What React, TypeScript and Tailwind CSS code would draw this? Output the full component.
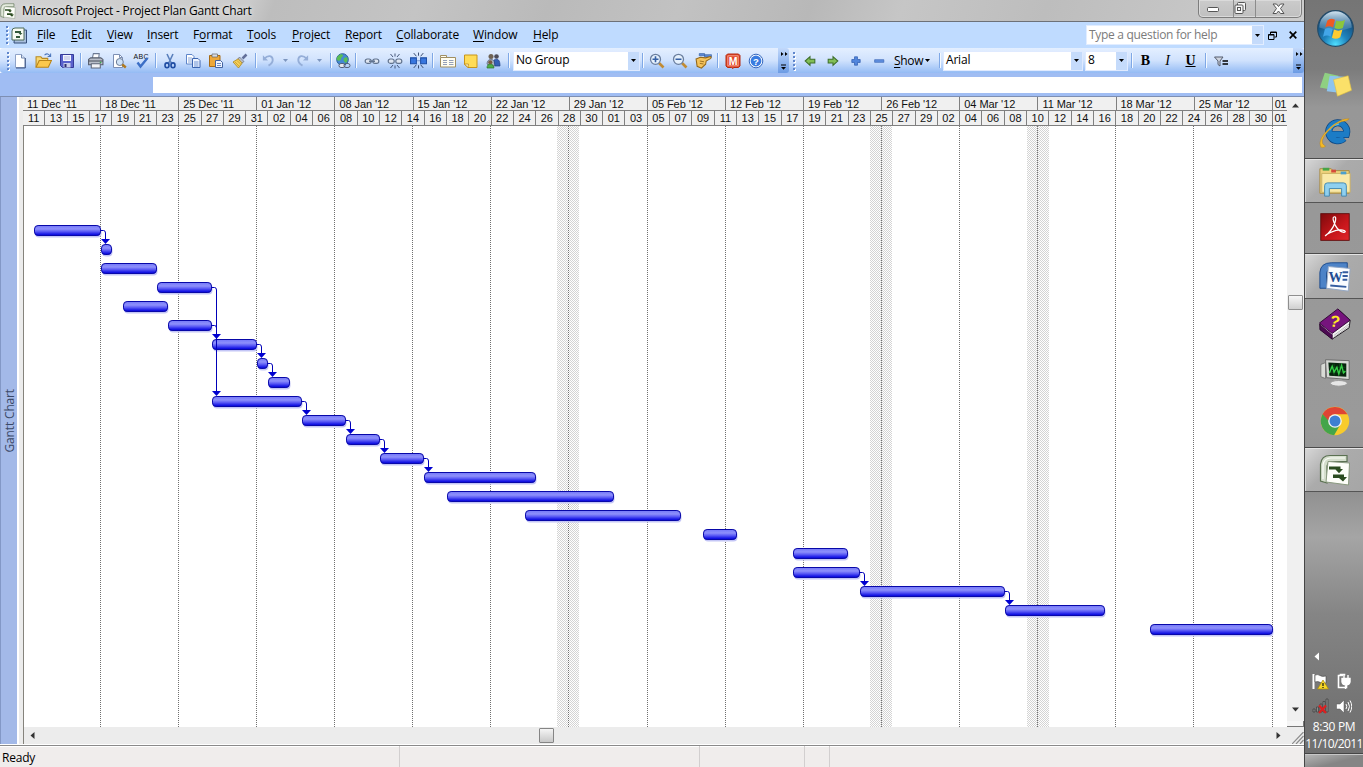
import React from "react";

type Kids = { children?: React.ReactNode };

const ui = "font-['Open_Sans','Noto_Sans',sans-serif]";
const arial = "font-['Liberation_Sans',Arial,sans-serif]";

/* ---------- timescale data ---------- */

const weeks = [
  "11 Dec '11", "18 Dec '11", "25 Dec '11", "01 Jan '12", "08 Jan '12", "15 Jan '12", "22 Jan '12", "29 Jan '12",
  "05 Feb '12", "12 Feb '12", "19 Feb '12", "26 Feb '12", "04 Mar '12", "11 Mar '12", "18 Mar '12", "25 Mar '12",
];

const days = Array.from({ length: 56 }, (_, i) => {
  const d = new Date(Date.UTC(2011, 11, 11 + i * 2));
  return String(d.getUTCDate()).padStart(2, "0");
});

const bars: [number, number][] = [
  [34, 101], [101, 112], [101, 157], [157, 212], [123, 168], [168, 212], [212, 257], [257, 268], [268, 290],
  [212, 302], [302, 346], [346, 380], [380, 424], [424, 536], [447, 614], [525, 681], [703, 737], [793, 848],
  [793, 860], [860, 1005], [1005, 1105], [1150, 1273],
];

const links: [number, number][] = [
  [0, 1], [3, 9], [5, 6], [6, 7], [7, 8], [9, 10], [10, 11], [11, 12], [12, 13], [18, 19], [19, 20],
];

const weekLines = [100, 178, 256, 334, 412, 490, 568, 647, 725, 803, 881, 959, 1037, 1115, 1193, 1272];

function Chart() {
  return (
    <svg width="1263" height="601" viewBox="24 126 1263 601" className="block bg-white">
      <defs>
        <linearGradient id="bar" x1="0" y1="0" x2="0" y2="1">
          <stop offset="0" stopColor="#7478f8" />
          <stop offset="0.35" stopColor="#8e90fb" />
          <stop offset="0.6" stopColor="#5a5af5" />
          <stop offset="0.85" stopColor="#1c1ce6" />
          <stop offset="1" stopColor="#0000d8" />
        </linearGradient>
        <pattern id="hatch" width="2" height="2" patternUnits="userSpaceOnUse">
          <rect width="1" height="1" fill="#d4d4d4" />
          <rect x="1" y="1" width="1" height="1" fill="#d4d4d4" />
        </pattern>
      </defs>
      {[557, 870, 1027].map((x) => (
        <rect key={x} x={x} y="126" width="22" height="601" fill="url(#hatch)" />
      ))}
      {weekLines.map((x) => (
        <path key={x} d={`M${x + 0.5} 126V727`} stroke="#707070" strokeDasharray="1 1" />
      ))}
      {bars.map(([a, b], i) => {
        const y = 225 + i * 19;
        return (
          <g key={i}>
            <rect x={a + 1} y={y + 2} width={b - a - 0.5} height="10.5" rx="4" fill="#c4c6f6" />
            <rect x={a + 0.5} y={y + 0.5} width={b - a - 1} height="10" rx="3.6" fill="url(#bar)" stroke="#0808a8" />
          </g>
        );
      })}
      {links.map(([f, t]) => {
        const x = bars[f][1];
        const y = 225 + f * 19 + 5.5;
        const ty = 225 + t * 19;
        return (
          <g key={`${f}-${t}`}>
            <path d={`M${x} ${y}h2.5q2 0 2 2.5V${ty - 3}`} fill="none" stroke="#0000b8" />
            <path d={`M${x} ${ty - 5}h9l-4.5 5z`} fill="#0000d0" />
          </g>
        );
      })}
    </svg>
  );
}

/* ---------- small pieces ---------- */

function I({ children, s = 16 }: Kids & { s?: number }) {
  return (
    <svg width={s} height={s} viewBox="0 0 16 16" fill="none" className="block shrink-0">
      {children}
    </svg>
  );
}

function Cell({ w, children }: Kids & { w: string }) {
  return <div className={`flex h-full shrink-0 items-center justify-center ${w}`}>{children}</div>;
}

function Sep({ w }: { w: string }) {
  return (
    <div className={`flex h-full shrink-0 items-center justify-center ${w}`}>
      <div className="h-[15px] w-px bg-[#7fa8e6]" />
      <div className="h-[15px] w-px bg-[#f4f9ff]" />
    </div>
  );
}

function Grip({ n = 5 }: { n?: number }) {
  return (
    <div className="flex flex-col gap-[2px]">
      {Array.from({ length: n }, (_, i) => (
        <div key={i} className="h-[2px] w-[2px] bg-[#5f86cc] shadow-[1px_1px_0_#ffffff]" />
      ))}
    </div>
  );
}

function Down({ c = "#000" }: { c?: string }) {
  return (
    <svg width="5" height="3" viewBox="0 0 5 3" className="block shrink-0">
      <path d="M0 0h5L2.5 3z" fill={c} />
    </svg>
  );
}

function Combo({ w, text }: { w: string; text: string }) {
  return (
    <div className={`flex h-[20px] shrink-0 border border-[#dfeaff] bg-white ${w}`}>
      <span className="flex-1 pl-[2px] text-[12px] leading-[16px] tracking-[-0.2px]">{text}</span>
      <div className="flex w-[11px] items-center justify-center bg-[#c5dbfb]">
        <Down />
      </div>
    </div>
  );
}

function Overflow() {
  return (
    <div className="flex h-[25px] w-[11px] shrink-0 flex-col items-center justify-between rounded-r-[3px] bg-gradient-to-b from-[#c2d9fb] to-[#6c9be4] pt-[4px] pb-[3px]">
      <svg width="8" height="5" viewBox="0 0 8 5"><path d="M1 0l2.5 2L1 4zM5 0l2.5 2L5 4z" fill="#000" /></svg>
      <svg width="7" height="6" viewBox="0 0 7 6"><path d="M1 1h5" stroke="#000" /><path d="M1 3h5L3.5 5.7z" fill="#000" /></svg>
    </div>
  );
}

/* ---------- toolbar icons ---------- */

const NewDoc = () => (
  <I><path d="M3.5 1.5h6l3.5 3.5v9.5H3.5z" fill="#fff" stroke="#8fa3c8" /><path d="M9.5 1.5V5H13" fill="#dbe5f5" stroke="#7388b0" /><path d="M13.3 5v10H4" stroke="#3f5583" /></I>
);
const Open = () => (
  <I s={17}><path d="M1 14V4.500h4.500l1.300 1.500H12v3" fill="#f7d774" stroke="#b88a22" /><path d="M1 14.300l3-6.300h11.500L12.500 14.300z" fill="#fbc84c" stroke="#b98418" /><path d="M9 3c2-2 4-1.500 5 .8M14.700 1.500v2.800h-2.800" stroke="#4e78bd" /></I>
);
const Save = () => (
  <I><path d="M1.500 1.500h13v13h-11l-2-2z" fill="#5a62cc" stroke="#353a98" /><path d="M4 2h8v6H4z" fill="#f2f4ff" /><path d="M5 4h6M5 6h6" stroke="#b4b9dd" /><path d="M4.500 10h7v4.500h-7z" fill="#c9cdea" /><path d="M5.500 11h2v3h-2z" fill="#2c3070" /></I>
);
const Print = () => (
  <I s={17}><path d="M5 6l1-4.500h5.500L11 6" fill="#fff" stroke="#6d7a94" /><path d="M1.500 7l2-1.500h9.500L15 7v5H1.500z" fill="#b9bec9" stroke="#555c6c" /><path d="M1.500 8.500H15" stroke="#474d5b" /><path d="M4 11h8.500v4H4z" fill="#f2f3f7" stroke="#5e6678" /><path d="M12 9.800h1.500" stroke="#37b047" strokeWidth="1.300" /></I>
);
const Preview = () => (
  <I><path d="M2.500 1.500h6l3 3v10h-9z" fill="#fff" stroke="#7d8fb3" /><path d="M8.500 1.500v3h3" stroke="#7d8fb3" /><circle cx="8.800" cy="9" r="3.500" fill="#cfe2f6" stroke="#6b7c97" /><path d="M11.300 11.500l3.500 3" stroke="#b07a20" strokeWidth="2.400" /></I>
);
const Spell = () => (
  <svg width="18" height="18" viewBox="0 0 18 18"><text x="0.500" y="6.500" fontSize="7" fontFamily="Liberation Sans" fill="#111" textLength="15">ABC</text><path d="M4.500 10.500l3 4L14.500 6" fill="none" stroke="#3c6fc6" strokeWidth="2.400" /></svg>
);
const Cut = () => (
  <I><path d="M5 1l4.500 9.500M11 1L6.500 10.500" stroke="#5b80bc" strokeWidth="1.600" /><ellipse cx="5" cy="12.300" rx="2" ry="2.400" stroke="#1f4da3" strokeWidth="1.600" /><ellipse cx="11" cy="12.300" rx="2" ry="2.400" stroke="#1f4da3" strokeWidth="1.600" /></I>
);
const Copy = () => (
  <I><path d="M1.500 1.500h5.500l2 2v7.500H1.500z" fill="#fff" stroke="#5f86ca" /><path d="M3 5h4M3 7h4M3 9h4" stroke="#8aa7da" /><path d="M7.500 5.500H13l2 2v7H7.500z" fill="#eef4ff" stroke="#3c65b0" /><path d="M9 9h4.500M9 11h4.500M9 13h4.500" stroke="#6f93d2" /></I>
);
const Paste = () => (
  <I><path d="M1.500 2.500h10.500v11H1.500z" fill="#eda83a" stroke="#a66a14" /><path d="M4 1h5.500v3H4z" fill="#d9dce4" stroke="#666" strokeWidth=".7" /><path d="M7.500 7.500h5l2 2v5h-7z" fill="#f0f5ff" stroke="#4264a2" /><path d="M9 10.500h4M9 12.500h4" stroke="#6f8fc6" /></I>
);
const Brush = () => (
  <I><path d="M14.500 1.500l-4 4" stroke="#63709a" strokeWidth="2.500" /><path d="M7.500 4l4.500 4.500-2 1.500-4-4z" fill="#b9bfcd" stroke="#626a80" strokeWidth=".7" /><path d="M6.200 5.800l4 4.200L6.500 15 1 9z" fill="#f5cf57" stroke="#a88422" strokeWidth=".8" /><path d="M3 9l4 4M5 7.500l4 4" stroke="#bd932a" strokeWidth=".7" /></I>
);
const Undo = () => (
  <I s={15}><path d="M3.500 6c4-4 9-3.500 9 1.500 0 3-2 4.500-4.500 6" stroke="#95aed8" strokeWidth="2" /><path d="M2 2.500V8h5.500z" fill="#95aed8" /></I>
);
const Redo = () => (
  <I s={15}><path d="M12.500 6c-4-4-9-3.500-9 1.500 0 3 2 4.500 4.500 6" stroke="#95aed8" strokeWidth="2" /><path d="M14 2.500V8H8.500z" fill="#95aed8" /></I>
);
const Globe = () => (
  <I><circle cx="7.500" cy="6.500" r="5.800" fill="#4489d2" stroke="#285c99" /><path d="M3 3c2-2 4-2 5-1 0 2-2 2-2 4s-3 2-4 1 0-3 1-4zM9 5l3-1c1 2 1 4-1 6-2-1-3-3-2-5z" fill="#59bd54" /><rect x="4" y="10.500" width="6" height="4" rx="2" fill="#e5e8ef" stroke="#54617a" /><rect x="9" y="10.500" width="6" height="4" rx="2" stroke="#54617a" /></I>
);
const ChainShapes = () => (
  <><rect x="1.200" y="6" width="6" height="4.300" rx="2.100" fill="#dfe6f1" stroke="#62748f" strokeWidth="1.200" /><rect x="8.800" y="6" width="6" height="4.300" rx="2.100" fill="#dfe6f1" stroke="#62748f" strokeWidth="1.200" /></>
);
const Link = () => (<I><ChainShapes /><path d="M5 8.200h6" stroke="#62748f" strokeWidth="1.400" /></I>);
const Rays = () => <path d="M8 .5v3M3.500 1l2.500 3M12.500 1L10 4M8 12.500v3M3.500 15L6 12M12.500 15L10 12" stroke="#36476b" strokeWidth=".9" />;
const Unlink = () => (<I><ChainShapes /><Rays /></I>);
const Split = () => (
  <I s={17}><path d="M.5 5.500h5.500v5.500H.5zM10 5.500h5.500v5.500H10z" fill="#3977df" stroke="#2151a7" /><path d="M6 8.200h4" stroke="#2151a7" strokeDasharray="1 1" /><Rays /></I>
);
const Notes = () => (
  <I><path d="M.5 4.500V2.500h6v2h9v9.500H.5z" fill="#fffdf0" stroke="#a08f62" /><path d="M1 4.500h6" stroke="#a08f62" /><path d="M3 7.500h4M3 9.500h4M3 11.500h4M9 7.500h4.500M9 9.500h4.500M9 11.500h4.500" stroke="#94a0b8" /></I>
);
const Sticky = () => (
  <I><path d="M1.500 2h12.500v12.500h-9l-3.500-3z" fill="#ffdc57" stroke="#c8951b" /><path d="M1.500 11h4l-.5 3.500z" fill="#fff3b8" stroke="#b4841c" strokeWidth=".7" /></I>
);
const People = () => (
  <I><circle cx="6" cy="3.500" r="2.500" fill="#6f6354" /><circle cx="11.500" cy="3.500" r="2.300" fill="#4d4d59" /><path d="M2 11c0-6 7-6 8-1v3H4z" fill="#a7b0be" stroke="#56627a" strokeWidth=".7" /><path d="M9 7c4-2 6 0 6 6h-5z" fill="#345fb5" stroke="#213f82" strokeWidth=".7" /><path d="M2 15c0-5 6-6 7 0z" fill="#4fae48" stroke="#2c7427" strokeWidth=".7" /><circle cx="5.300" cy="9.300" r="2" fill="#785a40" /></I>
);
const Zoom = ({ plus }: { plus?: boolean }) => (
  <I><path d="M10 10l4.500 4.500" stroke="#c18b34" strokeWidth="2.600" /><circle cx="6.500" cy="6.300" r="5" fill="#e6f1fd" stroke="#6b7f9f" strokeWidth="1.300" /><path d={plus ? "M3.500 6.300h6M6.500 3.300v6" : "M3.500 6.300h6"} stroke="#3560a5" strokeWidth="1.600" /></I>
);
const Goto = () => (
  <I s={17}><path d="M4 1.500h5v2H4zM9 2.500h6.500v2.300H9z" fill="#5d8bd8" stroke="#37609f" strokeWidth=".6" /><path d="M1 6.500L5 5l5 .5 4.500-1.300q1.500 1 0 2L10.500 8.500l-.5 3L6 15.200 2 13.500z" fill="#f4c35c" stroke="#93681b" /><path d="M4.500 8.500l4 .7M4.500 10.700l3.500.6" stroke="#93681b" strokeWidth=".8" /></I>
);
const MBox = () => (
  <I><path d="M2.500 1h11l1.500 1.500v10.500L13.500 14.500H9L7.500 15.500 6.500 14.500h-4L1 13V2.500z" fill="#e04425" stroke="#b32b13" /><path d="M2.800 2.800h10.400v10H2.800z" stroke="#f9b4a3" strokeWidth=".8" /><text x="8" y="11.500" fontSize="10.500" fontWeight="700" textAnchor="middle" fill="#fff" fontFamily="Liberation Sans">M</text></I>
);
const Help = () => (
  <I><circle cx="8" cy="8" r="6.800" fill="#fff" stroke="#3467be" /><circle cx="8" cy="8" r="5.400" fill="#387be0" /><text x="8" y="11.500" fontSize="9.500" fontWeight="700" textAnchor="middle" fill="#fff" fontFamily="Liberation Sans">?</text></I>
);
const Arrow = ({ flip }: { flip?: boolean }) => (
  <I s={14}><path transform={flip ? "translate(16 0) scale(-1 1)" : undefined} d="M2.500 8l5.500-5V6H13.500v4.200H8V13z" fill="#82bf56" stroke="#3d6e2a" strokeWidth="1.200" /></I>
);
const Plus = () => (<I s={14}><path d="M6.300 3.200h3.400v3.100h3.100v3.400H9.700v3.100H6.300V9.700H3.200V6.300h3.100z" fill="#5286dd" stroke="#2c5aad" strokeWidth=".8" /></I>);
const Minus = () => (<I s={14}><path d="M3 6.500h10.500v3H3z" fill="#6090e0" stroke="#3c67b6" strokeWidth=".8" /></I>);
const Filter = () => (
  <I><path d="M1.500 4h8.500L7 8v5l-2-1.500V8z" fill="#ced4df" stroke="#555d6e" /><path d="M9.500 8h5.500M9.500 11h5.500" stroke="#000" strokeWidth="1.700" /></I>
);

/* ---------- application logo ---------- */

function ProjectLogo({ s }: { s: number }) {
  return (
    <svg width={s} height={s} viewBox="0 0 32 32" className="block shrink-0">
      <path d="M1.500 27V10Q2.500 1.500 11 1.500h17v6H12Q9 8 8 12v17z" fill="#d5decd" stroke="#5b7152" strokeWidth="1.200" />
      <path d="M4 25V11Q5 4 12 4h14" fill="none" stroke="#fbfdf8" strokeWidth="1.200" />
      <path d="M9 7.500L30.500 9 29.500 31 7 28z" fill="#fdfef9" stroke="#8a9a80" />
      <path d="M10 12.500h11.500V15H24l-4 4.200L16.500 15.500H10zM14 20.500h11V23h3l-4 4.500L20 24h-6z" fill="#2b4c20" />
    </svg>
  );
}

/* ---------- bars of the window ---------- */

function TitleBar() {
  return (
    <div className="flex h-[22px] shrink-0 border-b border-[#6d7178] bg-[linear-gradient(110deg,#d2d2d2_0%,#cbcbcb_19%,#bdbdbd_21%,#c4c4c4_32%,#bababa_42%,#c2c2c2_52%,#b8b8b8_62%,#c6c6c6_69%,#bdbdbd_80%,#cdcdcd_100%)]">
      <div className="flex flex-1 items-center gap-[6px]">
        <ProjectLogo s={16} />
        <span className="text-[12px] tracking-[-0.24px] [text-shadow:0_0_5px_#fff]">Microsoft Project - Project Plan Gantt Chart</span>
      </div>
      <div className="mr-[2px] flex h-[18px] w-[104px] rounded-b-[5px] border border-t-0 border-[#7d7d7d] bg-gradient-to-b from-[#cbcbcb] to-[#c0c0c0] shadow-[inset_0_0_0_1px_#dadada]">
        <div className="flex w-[35px] items-center justify-center border-r border-[#8c8c8c]">
          <svg width="13" height="6" viewBox="0 0 13 6" className="mt-[3px] ml-[-5px]"><rect x=".5" y=".5" width="11" height="4" rx="1" fill="#fff" stroke="#555" /></svg>
        </div>
        <div className="flex w-[22px] items-center justify-center border-r border-[#8c8c8c]">
          <svg width="13" height="13" viewBox="0 0 13 13" fill="#f6f6f6" stroke="#555" className="mr-[8px] shrink-0"><rect x="3.500" y=".5" width="8" height="8" rx="1" /><rect x="1" y="3" width="8" height="8.500" rx="1" /><rect x="3.500" y="5.500" width="3" height="3" /></svg>
        </div>
        <div className="flex flex-1 items-center justify-center">
          <svg width="13" height="12" viewBox="0 0 13 12"><path d="M1 1h3.500l2 2.500 2-2.500H12L8.500 5.500 12 10.500H8.500l-2-2.500-2 2.500H1l3.500-5z" fill="#fbfbfb" stroke="#555" /></svg>
        </div>
      </div>
    </div>
  );
}

const menu: [string, string, string, string][] = [
  ["w-[34px]", "", "F", "ile"], ["w-[36px]", "", "E", "dit"], ["w-[40px]", "", "V", "iew"], ["w-[46px]", "", "I", "nsert"],
  ["w-[54px]", "F", "o", "rmat"], ["w-[45px]", "", "T", "ools"], ["w-[53px]", "", "P", "roject"], ["w-[51px]", "", "R", "eport"],
  ["w-[77px]", "", "C", "ollaborate"], ["w-[60px]", "", "W", "indow"], ["w-[40px]", "", "H", "elp"],
];

function MenuBar() {
  return (
    <div className="flex h-[26px] shrink-0 items-center bg-[#bfdbff]">
      <div className="flex w-[37px] items-center gap-[3px] pl-[6px]">
        <Grip />
        <svg width="17" height="17" viewBox="0 0 17 17"><path d="M4 3h11.500v13H3z" fill="#a8bedd" stroke="#344e79" /><path d="M1 12V4q0-3 3-3h9v12H1z" fill="#f7fbf2" stroke="#4d6b59" /><path d="M4 4h6v2h1.500L9.500 8l-2-2H4zM5 9h4v2H5z" fill="#32593a" /></svg>
      </div>
      {menu.map(([w, a, u, b]) => (
        <span key={u + b} className={`shrink-0 text-[12px] tracking-[-0.15px] ${w}`}>
          {a}<span className="underline underline-offset-2">{u}</span>{b}
        </span>
      ))}
      <div className="flex-1" />
      <div className="flex h-[20px] w-[178px] border border-[#e2edff] bg-white">
        <span className="flex-1 pl-[2px] text-[12px] leading-[17px] tracking-[-0.3px] text-[#7b7b7b]">Type a question for help</span>
        <div className="flex w-[11px] items-center justify-center bg-[#c5dbfb]"><Down /></div>
      </div>
      <svg width="9" height="9" viewBox="0 0 9 9" className="ml-[4px]" fill="none" stroke="#000"><path d="M2.500 3V1h6v5H6.500M2.500 1.500h6" /><path d="M.5 3.500h5.500v5H.5zM.5 4h5.500" /></svg>
      <svg width="8" height="8" viewBox="0 0 8 8" className="mr-[7px] ml-[12px]"><path d="M.7.700l6.600 6.600M7.300.700L.7 7.300" stroke="#000" strokeWidth="1.700" /></svg>
    </div>
  );
}

function ToolBar() {
  return (
    <div className="flex h-[25px] shrink-0 items-center overflow-hidden rounded-l-[3px] bg-gradient-to-b from-[#e4efff] via-[#d0e2fd] to-[#94bbf4]">
      <div className="flex w-[9px] justify-end"><Grip /></div>
      <Cell w="w-[22px]"><NewDoc /></Cell><Cell w="w-[24px]"><Open /></Cell><Cell w="w-[23px]"><Save /></Cell>
      <Sep w="w-[6px]" />
      <Cell w="w-[23px]"><Print /></Cell><Cell w="w-[23px]"><Preview /></Cell><Cell w="w-[23px]"><Spell /></Cell>
      <Sep w="w-[6px]" />
      <Cell w="w-[22px]"><Cut /></Cell><Cell w="w-[23px]"><Copy /></Cell><Cell w="w-[24px]"><Paste /></Cell><Cell w="w-[23px]"><Brush /></Cell>
      <Sep w="w-[9px]" />
      <Cell w="w-[17px]"><Undo /></Cell><Cell w="w-[17px]"><Down c="#7d96bf" /></Cell>
      <Cell w="w-[17px]"><Redo /></Cell><Cell w="w-[17px]"><Down c="#7d96bf" /></Cell>
      <Sep w="w-[6px]" />
      <Cell w="w-[18px]"><Globe /></Cell>
      <Sep w="w-[8px]" />
      <Cell w="w-[23px]"><Link /></Cell><Cell w="w-[23px]"><Unlink /></Cell><Cell w="w-[24px]"><Split /></Cell>
      <Sep w="w-[6px]" />
      <Cell w="w-[23px]"><Notes /></Cell><Cell w="w-[23px]"><Sticky /></Cell><Cell w="w-[22px]"><People /></Cell>
      <Sep w="w-[9px]" />
      <Combo w="w-[127px]" text="No Group" />
      <Sep w="w-[5px]" />
      <Cell w="w-[23px]"><Zoom plus /></Cell><Cell w="w-[23px]"><Zoom /></Cell><Cell w="w-[24px]"><Goto /></Cell>
      <Sep w="w-[6px]" />
      <Cell w="w-[23px]"><MBox /></Cell><Cell w="w-[23px]"><Help /></Cell>
      <div className="w-[11px] shrink-0" />
      <Overflow />
      <Cell w="w-[10px]"><Grip /></Cell>
      <Cell w="w-[22px]"><Arrow /></Cell><Cell w="w-[23px]"><Arrow flip /></Cell><Cell w="w-[23px]"><Plus /></Cell><Cell w="w-[23px]"><Minus /></Cell>
      <div className="flex w-[46px] shrink-0 items-center gap-[2px] pl-[4px]">
        <span className="text-[12px] tracking-[-0.3px]"><span className="underline underline-offset-2">S</span>how</span><Down />
      </div>
      <Sep w="w-[7px]" />
      <Combo w="w-[140px]" text="Arial" />
      <div className="w-[2px] shrink-0" />
      <Combo w="w-[43px]" text="8" />
      <Sep w="w-[7px]" />
      <Cell w="w-[21px]"><b className="font-['Liberation_Serif',serif] text-[14px] font-black">B</b></Cell>
      <Cell w="w-[23px]"><b className="font-['Liberation_Serif',serif] text-[14px] font-normal italic">I</b></Cell>
      <Cell w="w-[23px]"><b className="font-['Liberation_Serif',serif] text-[14px] underline">U</b></Cell>
      <Sep w="w-[8px]" />
      <Cell w="w-[22px]"><Filter /></Cell>
      <div className="flex-1" />
      <Overflow />
    </div>
  );
}

function ScrollArrow({ d, w = 7, h = 7 }: { d: string; w?: number; h?: number }) {
  return <svg width={w} height={h} viewBox="0 0 7 7"><path d={d} fill="#333" /></svg>;
}

function GanttPane() {
  return (
    <div className="flex h-[648px] shrink-0 border-t border-[#7e8fb3]">
      <div className="flex w-[17px] shrink-0 items-center justify-center border-l border-[#8398c6] bg-[#a3b9e8]">
        <span className="mr-[-2px] rotate-180 text-[12px] leading-[16px] tracking-[-0.15px] text-[#3a4867] [writing-mode:vertical-rl]">Gantt Chart</span>
      </div>
      <div className="w-[2px] bg-white" />
      <div className="w-[4px] bg-[#ececec]" />
      <div className="flex flex-1 flex-col border-l border-[#85837c]">
        <div className="flex h-[630px]">
          <div className="w-[1263px] shrink-0">
            <div className={`ml-[-1px] h-[29px] w-[1264px] border-b border-[#808080] bg-[#f0f0f0] text-[11px] text-[#111] ${arial}`}>
              <div className="flex h-[14px] border-b border-[#808080]">
                {weeks.map((w) => (
                  <div key={w} className="w-[78.120px] shrink-0 border-r border-[#808080] pl-[4px] leading-[14px] tracking-[-0.07px] whitespace-nowrap">{w}</div>
                ))}
                <div className="w-[14px] shrink-0 pl-[2px] leading-[14px] tracking-[-0.5px]">01</div>
              </div>
              <div className="flex h-[14px]">
                {days.map((d, i) => (
                  <div key={i} className="w-[22.320px] shrink-0 border-r border-[#808080] text-center leading-[14px]">{d}</div>
                ))}
                <div className="w-[14px] shrink-0 pl-[2px] leading-[14px] tracking-[-0.5px]">01</div>
              </div>
            </div>
            <Chart />
          </div>
          <div className="flex flex-1 flex-col items-center bg-[#f0f0f0]">
            <div className="flex h-[17px] items-center"><ScrollArrow d="M0 5.500L3.500 1.500 7 5.500z" /></div>
            <div className="h-[181px]" />
            <div className="mr-px h-[15px] w-[15px] rounded-[1px] border border-[#8f8f8f] bg-gradient-to-b from-[#f7f7f7] to-[#cfcfcf]" />
            <div className="flex-1" />
            <div className="mb-[8px]"><ScrollArrow d="M0 1.500h7L3.500 5.500z" /></div>
            <div className="h-[6px] w-full border-r border-b border-[#777] bg-[#f5f5f5]" />
          </div>
        </div>
        <div className="flex h-[17px] items-center bg-[#ececec]">
          <div className="flex w-[16px] justify-center"><ScrollArrow d="M5.500 0v7L1.500 3.500z" /></div>
          <div className="w-[499px]" />
          <div className="h-[15px] w-[15px] rounded-[1px] border border-[#858585] bg-gradient-to-b from-[#f5f5f5] to-[#c8c8c8]" />
          <div className="flex-1" />
          <ScrollArrow d="M1.500 0v7L5.500 3.500z" />
          <svg width="12" height="12" viewBox="0 0 12 12" className="ml-[10px] self-end"><path d="M0 12L11.500 0M4 12l7.500-8M8 12l3.500-4" stroke="#8c8c8c" strokeWidth="1.200" /></svg>
        </div>
      </div>
    </div>
  );
}

function StatusBar() {
  return (
    <div className="mt-px flex h-[22px] shrink-0 border-t border-[#8a8a8a] bg-[#f0edec] text-[12px] shadow-[inset_0_1px_0_#fff]">
      <div className="w-[400px] border-r border-[#d2cfcf] pl-[2px] leading-[23px] tracking-[-0.2px]">Ready</div>
      <div className="w-[300px] border-r border-[#d2cfcf]" />
      <div className="w-[105px] border-r border-[#d2cfcf]" />
      <div className="w-[25px] border-r border-[#d2cfcf]" />
    </div>
  );
}

/* ---------- taskbar ---------- */

function Pic({ children, s = 34 }: Kids & { s?: number }) {
  return <svg width={s} height={s} viewBox="0 0 36 36" className="block shrink-0">{children}</svg>;
}

function Slot({ h, on, children }: Kids & { h: string; on?: boolean }) {
  return (
    <div className={`flex shrink-0 items-center justify-center pl-[2px] ${h} ${on ? "border-y border-t-[#4b4b4b] border-b-[#555] bg-[linear-gradient(135deg,#d8d8d8,#ababab_45%,#a6a6a6)] shadow-[inset_0_1px_0_#e4e4e4,inset_1px_0_0_#d2d2d2]" : ""}`}>
      {children}
    </div>
  );
}

function TaskBar() {
  return (
    <div className="flex w-[59px] shrink-0 flex-col border-l border-[#464646] bg-[linear-gradient(180deg,#757575_0%,#7c7c7c_9%,#979797_14%,#9a9a9a_55%,#909090_64%,#a5a5a5_70%,#858585_80%,#747474_92%,#6e6e6e_100%)]">
      <Slot h="h-[56px]">
        <Pic s={39}>
          <defs>
            <radialGradient id="orb" cx=".5" cy=".95" r=".85"><stop offset="0" stopColor="#4fe0ff" /><stop offset=".4" stopColor="#1f83bd" /><stop offset="1" stopColor="#123f6b" /></radialGradient>
            <linearGradient id="gloss" x1="0" y1="0" x2="0" y2="1"><stop offset="0" stopColor="#d3e6f2" /><stop offset="1" stopColor="#5c93b8" stopOpacity=".4" /></linearGradient>
          </defs>
          <circle cx="18" cy="18" r="16.500" fill="url(#orb)" stroke="#244b67" />
          <path d="M3 17a15 15 0 0 1 30 0Q18 23 3 17z" fill="url(#gloss)" />
          <path d="M10.500 10.500Q13.500 8 17.500 10L15.700 17Q12 15 8.500 17z" fill="#ee5a24" />
          <path d="M18.800 10.500q4 2 8-.5l-2 7.500q-4 2-7.800 0z" fill="#8cc63c" />
          <path d="M8.200 18.500q3.600-2 7.200 0L13.500 25.500q-3.500-2-7 0z" fill="#43a6e8" />
          <path d="M16.600 19q4 2 7.800 0l-2 7q-4 2.500-7.700.5z" fill="#fdcb31" />
        </Pic>
      </Slot>
      <Slot h="h-[57px]">
        <Pic s={35}>
          <path d="M7 6l14 3-4 15L2 21z" fill="#8fd082" /><path d="M12 9l15 1-1 17-17-2z" fill="#8ec4ee" /><path d="M16 13l15-4 3.500 15L20 30z" fill="#fbe069" stroke="#dfbe3e" strokeWidth=".6" />
        </Pic>
      </Slot>
      <Slot h="h-[45px] pb-[6px]">
        <Pic s={34}>
          <path d="M27.500 23.500A9.500 9.500 0 1 1 30 19.500H14" fill="none" stroke="#0d4682" strokeWidth="7.500" />
          <path d="M27.500 23.500A9.500 9.500 0 1 1 30 19.500H14" fill="none" stroke="#1c7cc6" strokeWidth="6" />
          <path d="M12 15Q15 9 22 8.500" fill="none" stroke="#55c1f2" strokeWidth="2" />
          <path d="M3 33Q-1 25 12 13 24 2 33 3q-1 1-3 2Q19 6 10 17 0 28 8 32q-2 2-5 1z" fill="#f3b927" stroke="#b9831c" strokeWidth=".5" />
        </Pic>
      </Slot>
      <Slot h="h-[45px]" on>
        <Pic>
          <path d="M2 5h12l2 2h17v24H2z" fill="#efd27c" stroke="#a68843" /><path d="M4 10h30v20H4z" fill="#fae9a8" stroke="#cbb063" /><path d="M5 4h7v3H5z" fill="#47a447" /><path d="M14 6h5v3h-5z" fill="#d64a3b" /><path d="M24 8h6v3h-6z" fill="#4c9fcc" />
          <path d="M7 34V23q0-3 3-3h17q3 0 3 3v11h-5v-8H12v8z" fill="#8fd0f0" stroke="#4187b0" />
        </Pic>
      </Slot>
      <Slot h="h-[50px] pb-[2px]">
        <Pic s={32}>
          <defs><linearGradient id="pdf" x1="0" y1="0" x2="1" y2="1"><stop offset="0" stopColor="#7e0a0c" /><stop offset=".6" stopColor="#c7161b" /><stop offset="1" stopColor="#e0262a" /></linearGradient></defs>
          <rect x="2" y="3" width="32" height="30" fill="url(#pdf)" stroke="#5f0b0b" />
          <path d="M7 28Q15 22 18 13q2-7-1-6.500-3 1 1.500 10Q22 23 28 24q3-.5.500-2Q23 20 13 24q-5 2-6 4z" fill="none" stroke="#fff" strokeWidth="1.400" />
        </Pic>
      </Slot>
      <Slot h="h-[46px]" on>
        <Pic>
          <path d="M2 31V14Q3 4 14 4h17v6H15Q9 11 9 16v15z" fill="#4d83c7" stroke="#1c4a8c" /><path d="M11 8l23 2-2 24-23-3z" fill="#fafcff" stroke="#93a7c5" />
          <text x="11" y="24" fontFamily="Liberation Serif" fontWeight="700" fontSize="15" fill="#244d93">W</text>
          <path d="M26 14h6M26 18h5.500M26 22h5M13 28l17 1.500" stroke="#345c9f" strokeWidth="2" />
        </Pic>
      </Slot>
      <Slot h="h-[50px]">
        <Pic>
          <path d="M2 18L22 3l12 11-1 8-18 12L3 24z" fill="#f3f3f3" stroke="#171018" /><path d="M1.500 17L21 2l13 12-19 14z" fill="#76147d" stroke="#2f0633" /><path d="M2 18v6l13 10v-5" fill="#4c0a52" stroke="#2f0633" /><path d="M17 30l16-12M17 32l16-12" stroke="#9a9a9a" strokeWidth=".7" />
          <text x="18" y="21" textAnchor="middle" fontFamily="Liberation Sans" fontWeight="700" fontSize="17" fill="#ffea24" transform="rotate(12 18 15)">?</text>
        </Pic>
      </Slot>
      <Slot h="h-[47px] pb-[2px]">
        <Pic>
          <path d="M3 10l5-2v17l-5-2z" fill="#d9dbd6" stroke="#777" /><path d="M8 5l25 1v20L9 24z" fill="#d6d8d4" stroke="#686868" /><path d="M11 8l19 1v14l-18-1z" fill="#07240d" /><path d="M12 13h17M12 18h17M17 9v13M23 9v13" stroke="#155e22" strokeWidth=".7" /><path d="M12 19l3-7 2 6 3-5 2 7 3-9 2 8 2-2" fill="none" stroke="#34cf46" strokeWidth="1.500" />
          <path d="M17 26h8l1 3H16z" fill="#aaa" /><ellipse cx="22" cy="30" rx="9" ry="3" fill="#e6e6e6" stroke="#999" />
        </Pic>
      </Slot>
      <Slot h="h-[51px] pb-[2px]">
        <Pic s={32}>
          <circle cx="18" cy="18" r="16" fill="#f8cb2c" />
          <path d="M4.100 10A16 16 0 0 0 17 34l7-12-6-4-7 1z" fill="#43a54a" /><path d="M4.100 10L11.500 22 18 12z" fill="#43a54a" /><path d="M4.100 10A16 16 0 0 1 31.900 10.500H18q-6 0-7.500 7z" fill="#df4434" />
          <circle cx="18" cy="18" r="7.700" fill="#f3f3f3" /><circle cx="18" cy="18" r="6.200" fill="#3d7fd2" />
        </Pic>
      </Slot>
      <Slot h="h-[45px]" on><ProjectLogo s={32} /></Slot>
      <div className="flex-1" />
      <div className="flex h-[14px] items-center pl-[9px]"><svg width="5" height="9" viewBox="0 0 5 9"><path d="M5 .5v8L.5 4.500z" fill="#fff" /></svg></div>
      <div className="mt-[9px] flex h-[18px] items-center gap-[7px] pl-[7px]">
        <svg width="17" height="17" viewBox="0 0 17 17"><path d="M1.500 1v15" stroke="#fff" strokeWidth="2" /><path d="M3 2q3-1 5 .5t6 .5v7q-3 1-5.500-.5T3 9z" fill="#fff" stroke="#454545" strokeWidth=".6" /><path d="M11 7l5.500 9h-11z" fill="#f7d727" stroke="#a78808" strokeWidth=".7" /><path d="M11 10v3M11 14v1" stroke="#111" strokeWidth="1.200" /></svg>
        <svg width="15" height="17" viewBox="0 0 15 17"><path d="M7 2.500H2.500v12h8V12M4.500 2.500v-1h4v1" fill="none" stroke="#fff" strokeWidth="1.600" /><path d="M6 5.500h8v3.500q-.5 3-4 3t-4-3zM8 2v4M12 2v4M9.500 12v4" fill="#fff" stroke="#fff" strokeWidth="1.400" /></svg>
      </div>
      <div className="mt-[7px] flex h-[18px] items-center gap-[7px] pl-[7px]">
        <svg width="17" height="16" viewBox="0 0 17 16"><path d="M1 11h2v3H1zM4.500 9h2v5h-2zM8 6h2v8H8zM11 3.500h2V14h-2zM14 1h2v13h-2z" fill="#8b8b8b" stroke="#343434" strokeWidth=".6" /><path d="M7 7.500l7 7.500M14 7.500L7 15" stroke="#db2020" strokeWidth="2.300" /></svg>
        <svg width="16" height="15" viewBox="0 0 16 15"><path d="M.5 5h3.500L8 1v13L4 10H.5z" fill="#fff" stroke="#555" strokeWidth=".5" /><path d="M10 5q1.500 2.500 0 5M12 3q3 4.500 0 9M14 1.500q3.500 6 0 12" fill="none" stroke="#fff" /></svg>
      </div>
      <div className="mt-[3px] flex flex-col items-center text-[12px] leading-[17px] tracking-[-0.6px] whitespace-nowrap text-white">
        <div className="tracking-[-0.35px]">8:30 PM</div>
        <div>11/10/2011</div>
      </div>
      <div className="mt-[1px] h-[14px] shrink-0 border-t border-[#454545] bg-[linear-gradient(165deg,#b8b8b8,#858585_60%)] shadow-[inset_0_1px_0_#c7c7c7]" />
    </div>
  );
}

export default function App() {
  return (
    <div className={`flex h-[767px] w-[1363px] overflow-hidden text-black ${ui}`}>
      <div className="flex w-[1304px] shrink-0 flex-col overflow-hidden">
        <TitleBar />
        <MenuBar />
        <ToolBar />
        <div className="h-[23px] shrink-0 bg-[#a0bdf3] pt-[4px] pr-[2px] pl-[153px]">
          <div className="h-[16px] bg-white" />
        </div>
        <GanttPane />
        <StatusBar />
      </div>
      <TaskBar />
    </div>
  );
}
